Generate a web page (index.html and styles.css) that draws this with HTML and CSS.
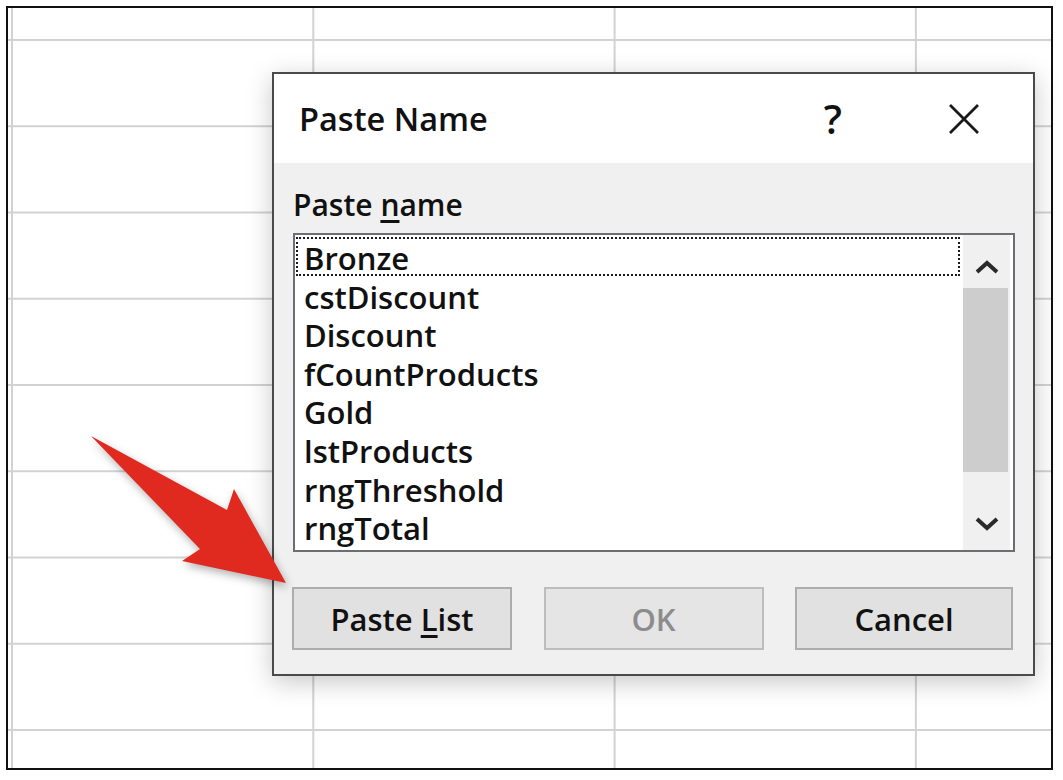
FILE: index.html
```html
<!DOCTYPE html>
<html lang="en">
<head>
<meta charset="utf-8">
<title>Paste Name</title>
<link rel="stylesheet" href="styles.css">
</head>
<body>
<div class="frame">
  <div class="dialog">
    <div class="titlebar">
      <span class="title">Paste Name</span>
      <span class="help">?</span>
      <span class="close">
        <svg width="32" height="32" viewBox="0 0 32 32"><path d="M2 2 L30 30 M30 2 L2 30" stroke="#1a1a1a" stroke-width="2.8" fill="none"/></svg>
      </span>
    </div>
    <div class="body">
      <div class="label">Paste <u>n</u>ame</div>
      <div class="listbox">
        <ul class="items">
          <li class="item focused">Bronze</li>
          <li class="item">cstDiscount</li>
          <li class="item">Discount</li>
          <li class="item">fCountProducts</li>
          <li class="item">Gold</li>
          <li class="item">lstProducts</li>
          <li class="item">rngThreshold</li>
          <li class="item">rngTotal</li>
        </ul>
        <div class="scrollbar">
          <div class="sb-btn sb-up">
            <svg width="26" height="16" viewBox="0 0 26 16"><path d="M3 13 L13 4 L23 13" stroke="#2a2a2a" stroke-width="4" fill="none"/></svg>
          </div>
          <div class="thumb"></div>
          <div class="track"></div>
          <div class="sb-btn sb-down">
            <svg width="26" height="16" viewBox="0 0 26 16"><path d="M3 3 L13 12 L23 3" stroke="#2a2a2a" stroke-width="4" fill="none"/></svg>
          </div>
        </div>
      </div>
      <div class="buttons">
        <button class="btn btn-paste">Paste <u>L</u>ist</button>
        <button class="btn btn-ok" disabled>OK</button>
        <button class="btn btn-cancel">Cancel</button>
      </div>
    </div>
  </div>
  <svg class="pointer" width="240" height="180" viewBox="0 0 240 180">
    <polygon points="21,16 157,90 164,69 216,163 112,141 130,129" fill="#e02a20"/>
  </svg>
</div>
</body>
</html>
```
FILE: styles.css
```css
html, body {
  margin: 0;
  padding: 0;
  background: #ffffff;
}

body {
  font-family: "Open Sans", "Noto Sans", sans-serif;
  color: #111111;
}

.frame {
  position: relative;
  margin: 6px 0 0 6px;
  width: 1043px;
  height: 760px;
  border: 2px solid #111111;
  background-color: #ffffff;
  background-image:
    linear-gradient(to right, #d2d2d2 2px, transparent 2px),
    linear-gradient(to bottom, #d2d2d2 2px, transparent 2px);
  background-size: 301.3px 100%, 100% 86.25px;
  background-position: 3px 0, 0 31px;
}

.dialog {
  position: absolute;
  left: 264px;
  top: 64px;
  width: 763px;
  height: 604px;
  box-sizing: border-box;
  border: 2px solid #4a4a4a;
  background: #f0f0f0;
  box-shadow: 0 6px 24px rgba(0, 0, 0, 0.22);
  display: flex;
  flex-direction: column;
}

.titlebar {
  height: 89px;
  background: #ffffff;
  display: flex;
  align-items: center;
  padding-left: 25px;
}

.title {
  flex: 1;
  font-size: 32.5px;
  font-weight: 600;
  line-height: 40px;
}

.help {
  font-size: 40px;
  font-weight: 600;
  line-height: 40px;
  margin-right: 106px;
}

.close {
  display: flex;
  margin-right: 53px;
}

.body {
  flex: 1;
  display: flex;
  flex-direction: column;
  padding: 0 20px 0 18px;
}

.label {
  margin-top: 24px;
  font-size: 30px;
  font-weight: 600;
  line-height: 36px;
  padding-left: 1px;
}

.label u,
.btn u {
  text-decoration-thickness: 3px;
  text-underline-offset: 4px;
}

.listbox {
  margin-top: 10px;
  margin-left: 1px;
  margin-right: -2px;
  height: 319px;
  box-sizing: border-box;
  border: 2px solid #6c6e74;
  background: #ffffff;
  display: flex;
}

.items {
  flex: 1;
  list-style: none;
  margin: 0;
  padding: 2px 3px 0 1px;
}

.item {
  height: 38.6px;
  box-sizing: border-box;
  border: 2px solid transparent;
  font-size: 31px;
  font-weight: 600;
  line-height: 38px;
  padding-left: 6px;
  white-space: nowrap;
}

.item.focused {
  border: 2px dotted #1a1a1a;
}

.scrollbar {
  width: 47px;
  margin-right: 3px;
  background: #f0f0f0;
  display: flex;
  flex-direction: column;
}

.sb-btn {
  height: 53px;
  display: flex;
  align-items: center;
  justify-content: center;
}

.sb-up {
  box-sizing: border-box;
  padding-top: 10px;
}

.thumb {
  height: 184px;
  background: #cdcdcd;
  margin-right: 2px;
}

.track {
  flex: 1;
}

.buttons {
  margin-top: 35px;
  display: flex;
  justify-content: space-between;
}

.btn {
  height: 63px;
  box-sizing: border-box;
  border: 2px solid #adadad;
  background: #e1e1e1;
  font-family: "Open Sans", "Noto Sans", sans-serif;
  font-size: 31px;
  font-weight: 600;
  color: #111111;
  padding: 0;
}

.btn-paste,
.btn-ok {
  width: 220px;
}

.btn-cancel {
  width: 218px;
}

.btn-ok {
  color: #8c8c8c;
  border-color: #bdbdbd;
  background: #e5e5e5;
}

.pointer {
  position: absolute;
  left: 62px;
  top: 412px;
  filter: drop-shadow(2px 4px 4px rgba(0, 0, 0, 0.3));
}
```
